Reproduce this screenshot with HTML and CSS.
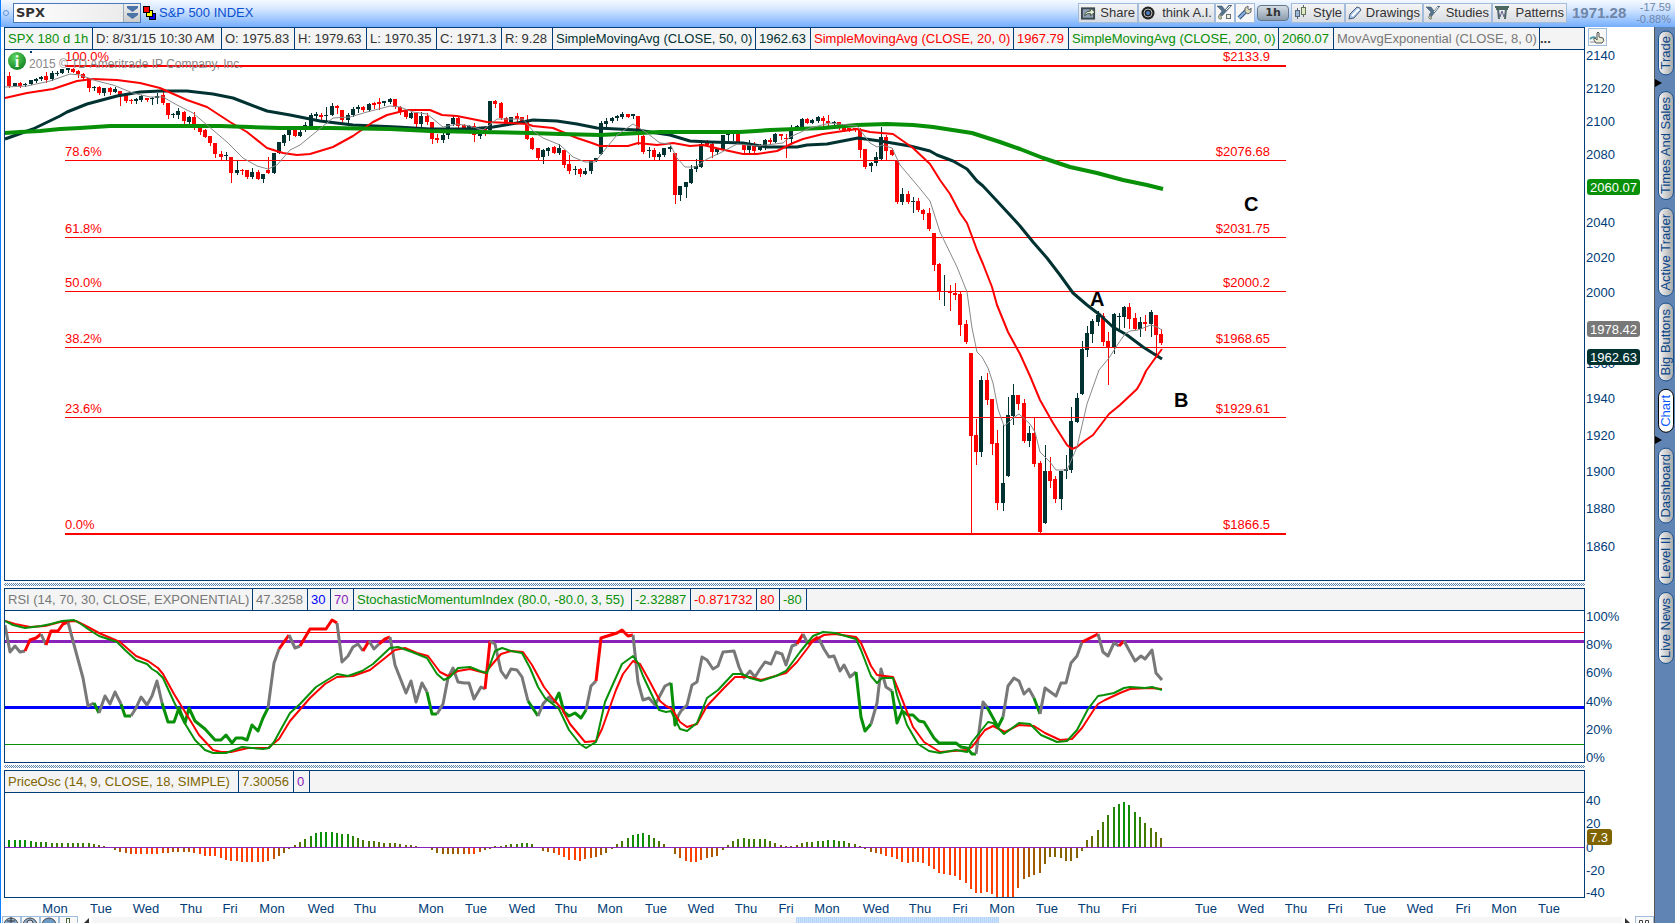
FILE: index.html
```html
<!DOCTYPE html>
<html lang="en">

<head>
    <meta charset="UTF-8">
    <meta name="viewport" content="width=device-width, initial-scale=1.0">
    <title>SPX Chart</title>
    <link rel="stylesheet" href="styles.css">
</head>

<body>
    <div class="workspace">
        <header class="toolbar">
            <span class="link-dot"></span>
            <div class="symbol-box">
                <input type="text" id="symbol" value="SPX" aria-label="Symbol">
                <button class="symbol-drop" aria-label="Symbol list">
                    <svg width="13" height="13" viewBox="0 0 13 13"><path d="M1 0h11v2L6.500 6 1 2zM1 7h11v2l-5.500 4L1 9z" fill="#4a74a8"/></svg>
                </button>
            </div>
            <svg class="squares" width="13" height="14" viewBox="0 0 13 14">
                <rect x="6.500" y="7.500" width="6" height="6" fill="#00f" stroke="#000"/>
                <rect x="3.500" y="4.500" width="6" height="6" fill="#ff0" stroke="#000"/>
                <rect x=".5" y=".5" width="6" height="6" fill="#f00" stroke="#000"/>
            </svg>
            <span class="symbol-name">S&amp;P 500 INDEX</span>
            <div class="tools">
                <button class="tool share">
                    <svg width="15" height="14" viewBox="0 0 16 14"><rect x="1" y="2" width="13" height="11" fill="#8fa3b4" stroke="#3c4650" stroke-width="2"/><path d="M4 10q0-5 6-5V2l5 4-5 4V7.500Q6 7 4 10z" fill="#e8f0d8" stroke="#3c4a3c"/></svg>
                    Share
                </button>
                <button class="tool think">
                    <svg width="14" height="14" viewBox="0 0 14 14"><circle cx="7" cy="7" r="6.500" fill="#222"/><circle cx="7" cy="7" r="4" fill="none" stroke="#bbb"/><circle cx="7" cy="7" r="2" fill="#4c7fc4"/></svg>
                    think A.I.
                </button>
                <button class="tool icon" aria-label="Edit studies">
                    <svg width="15" height="15" viewBox="0 0 15 15"><path d="M0 1h5l3 4 4-5h3L5 11 3 9l2-3z" fill="#56748e" stroke="#34485a" stroke-width=".5"/><path d="M9 5l4-4" stroke="#fff"/><path d="M3 9q-3 4 0 5t0-5z" fill="#c5d6a0" stroke="#777"/><rect x="9.500" y="9.500" width="4" height="4" fill="#eef3dc" stroke="#667"/></svg>
                </button>
                <button class="tool icon" aria-label="Settings">
                    <svg width="15" height="15" viewBox="0 0 15 15"><path d="M2 13l7-7" stroke="#2f5488" stroke-width="4"/><path d="M2 13l7-7" stroke="#8fb4dc" stroke-width="2"/><path d="M8 7V3l3-2v3l2 1 1-2v4l-3 2z" fill="#d8dcb4" stroke="#667"/></svg>
                </button>
                <button class="tool period">1h</button>
                <button class="tool style">
                    <svg width="13" height="15" viewBox="0 0 13 15"><path d="M3.500 3v11M9.500 0v12" stroke="#567"/><rect x="1.500" y="5.500" width="4" height="6" fill="#9cb6d8" stroke="#567"/><rect x="7.500" y="2.500" width="4" height="7" fill="#dfe8c8" stroke="#675"/></svg>
                    Style
                </button>
                <button class="tool drawings">
                    <svg width="14" height="14" viewBox="0 0 14 14"><path d="M1 13l1-5 7-7q3 0 4 3l-7 8z" fill="#a9c6ea" stroke="#465c78"/><path d="M4 10l7-7" stroke="#fff" stroke-width="2"/></svg>
                    Drawings
                </button>
                <button class="tool studies">
                    <svg width="14" height="14" viewBox="0 0 14 14"><path d="M0 1h5l3 4 4-5h2L5 11 3 9l2-3z" fill="#56748e" stroke="#34485a" stroke-width=".5"/><path d="M8 6l4-5" stroke="#fff"/><path d="M4 9q-3 3 0 4t0-4z" fill="#c5d6a0" stroke="#777"/></svg>
                    Studies
                </button>
                <button class="tool patterns">
                    <svg width="14" height="14" viewBox="0 0 14 14"><path d="M0 1h14M1 3h12M3 3l1 10M11 3l-1 10" stroke="#4c6860" stroke-width="2" fill="none"/><path d="M3 5l2 6 2-6 2 6 2-6" stroke="#668" fill="none"/></svg>
                    Patterns
                </button>
            </div>
            <div class="quote">
                <strong>1971.28</strong>
                <span class="change">-17.59<br>-0.88%</span>
            </div>
        </header>

        <main class="charts">
            <section class="panel price">
                <div class="plot">
                    <div class="legend price-legend">
                        <span class="green">SPX 180 d 1h</span>
                        <span>D: 8/31/15 10:30 AM</span>
                        <span>O: 1975.83</span>
                        <span>H: 1979.63</span>
                        <span>L: 1970.35</span>
                        <span>C: 1971.3</span>
                        <span>R: 9.28</span>
                        <span class="dark">SimpleMovingAvg (CLOSE, 50, 0)</span>
                        <span class="dark">1962.63</span>
                        <span class="red">SimpleMovingAvg (CLOSE, 20, 0)</span>
                        <span class="red">1967.79</span>
                        <span class="green">SimpleMovingAvg (CLOSE, 200, 0)</span>
                        <span class="green">2060.07</span>
                        <span class="gray">MovAvgExponential (CLOSE, 8, 0)</span>
                        <strong>...</strong>
                    </div>
                    <svg class="canvas" viewBox="5 50 1579 530" preserveAspectRatio="xMinYMin">
                        <defs>
                            <radialGradient id="info" cx=".4" cy=".3" r=".8">
                                <stop offset="0" stop-color="#5fd65f"/>
                                <stop offset="1" stop-color="#0a7a1c"/>
                            </radialGradient>
                        </defs>
                        <rect x="30" y="51" width="2" height="2" fill="#003c78"/>
                        <g id="candles" shape-rendering="crispEdges"></g>
                        <g id="fib" class="fib"></g>
                        <polyline class="line sma50" points="5,139 33,129 60,116 67,112 87,104 117,96 140,92 160,91 187,91 213,94 233,98 267,111 290,115 320,121 353,125 397,127 430,129 470,129 493,127 517,123 533,120 557,121 577,124 597,128 637,130 670,135 690,141 710,142 743,143 767,147 797,147 807,145 827,144 858,138 880,141 910,146 930,151 937,155 953,161 967,169 977,181 983,186 997,201 1010,215 1020,226 1033,242 1047,258 1060,275 1073,293 1087,305 1100,315 1113,327 1127,335 1143,347 1162,359"/>
                        <polyline class="line sma20" points="5,98 27,93 53,89 77,81 93,79 117,80 140,83 160,88 187,100 207,107 230,122 247,132 267,148 283,153 297,155 310,154 333,147 353,136 373,122 387,115 407,110 430,110 442,115 457,116 487,122 510,123 527,124 533,126 553,128 577,138 592,143 600,146 628,146 638,143 657,145 673,143 690,146 703,145 720,149 743,154 757,154 777,151 793,143 803,139 823,134 857,129 870,132 893,134 913,148 930,164 940,180 950,194 960,213 967,223 977,250 983,264 992,287 997,305 1008,332 1020,354 1030,376 1040,400 1053,423 1067,445 1072,449 1077,447 1083,442 1093,435 1109,414 1120,405 1137,389 1141,382 1146,371 1156,357 1162,349"/>
                        <polyline class="line sma200" points="5,133 20,132 40,131 60,129 80,128 110,126 220,126 250,127 280,128 330,128 390,129 430,131 480,132 530,133 560,134 600,135 640,133 660,132 740,132 770,130 823,128 857,125 887,124 913,125 933,127 972,133 1000,142 1020,149 1043,158 1070,167 1097,173 1123,180 1147,185 1163,189"/>
                        <polyline class="line ema8" points="5,87 27,86 50,81 70,74 80,75 97,81 113,85 133,93 150,97 163,97 177,105 193,113 207,125 227,142 243,158 257,166 268,169 277,165 290,150 300,145 317,131 333,118 350,117 367,112 390,106 400,107 413,112 427,114 443,127 457,124 470,126 483,130 497,119 523,119 533,131 543,138 560,145 573,157 585,162 595,162 603,152 617,135 633,124 647,133 660,143 670,144 677,158 685,167 695,167 707,159 720,153 737,144 757,146 783,143 790,137 810,128 830,123 857,126 870,143 877,147 882,145 892,148 900,165 917,185 930,201 940,232 957,267 967,292 972,328 977,352 982,357 988,368 993,383 998,409 1004,426 1008,423 1013,418 1019,414 1030,424 1035,432 1040,452 1050,462 1056,470 1067,470 1077,447 1087,404 1099,370 1109,358 1118,344 1125,334 1130,331 1138,330 1151,325 1157,327 1162,330"/>
                        <text x="29" y="68" class="copyright">2015 © TD Ameritrade IP Company, Inc.</text>
                        <circle cx="17" cy="61" r="9" fill="url(#info)"/>
                        <text x="17" y="67" class="info-i">i</text>
                        <g class="wave">
                            <text x="1090" y="306">A</text>
                            <text x="1174" y="407">B</text>
                            <text x="1244" y="211">C</text>
                        </g>
                    </svg>
                </div>
                <div class="axis">
                    <button class="hand" aria-label="Pan chart">
                        <svg width="16" height="14" viewBox="0 0 16 14"><path d="M1 9q3-3 6-1" stroke="#4c9ca8" fill="none" stroke-width="2"/><path d="M1 12h7" stroke="#889"/><path d="M7 13q-4-5-1-5l2 2V3q1-2 2 0v4l4 1q2 3-1 5z" fill="#e8ecd4" stroke="#555"/></svg>
                    </button>
                    <svg viewBox="1585 27 69 554" preserveAspectRatio="xMinYMin">
                        <g class="ticks">
                            <text x="1586" y="60">2140</text>
                            <text x="1586" y="93">2120</text>
                            <text x="1586" y="126">2100</text>
                            <text x="1586" y="159">2080</text>
                            <text x="1586" y="227">2040</text>
                            <text x="1586" y="262">2020</text>
                            <text x="1586" y="297">2000</text>
                            <text x="1586" y="368">1960</text>
                            <text x="1586" y="403">1940</text>
                            <text x="1586" y="440">1920</text>
                            <text x="1586" y="476">1900</text>
                            <text x="1586" y="513">1880</text>
                            <text x="1586" y="551">1860</text>
                        </g>
                        <g class="tags">
                            <rect x="1587" y="179" width="53" height="16" rx="3" fill="#089008"/>
                            <text x="1590" y="192">2060.07</text>
                            <rect x="1587" y="321" width="53" height="16" rx="3" fill="#787878"/>
                            <text x="1590" y="334">1978.42</text>
                            <rect x="1587" y="349" width="53" height="16" rx="3" fill="#003232"/>
                            <text x="1590" y="362">1962.63</text>
                        </g>
                    </svg>
                </div>
            </section>

            <div class="splitter"></div>

            <section class="panel rsi">
                <div class="plot">
                    <div class="legend rsi-legend">
                        <span class="gray">RSI (14, 70, 30, CLOSE, EXPONENTIAL)</span>
                        <span class="gray">47.3258</span>
                        <span class="blue">30</span>
                        <span class="purple">70</span>
                        <span class="green">StochasticMomentumIndex (80.0, -80.0, 3, 55)</span>
                        <span class="green">-2.32887</span>
                        <span class="red">-0.871732</span>
                        <span class="red">80</span>
                        <span class="green">-80</span>
                    </div>
                    <svg class="canvas" viewBox="5 611 1579 151" preserveAspectRatio="xMinYMin">
                        <g shape-rendering="crispEdges">
                            <rect x="5" y="632" width="1579" height="1" fill="#f00"/>
                            <rect x="5" y="640" width="1579" height="3" fill="#8822bb"/>
                            <rect x="5" y="706" width="1579" height="3" fill="#00f"/>
                            <rect x="5" y="744" width="1579" height="1" fill="#089008"/>
                        </g>
                        <g id="rsi" class="rsi-line"></g>
                        <polyline class="line smi-avg" points="5,621 15,624 30,627 45,626 60,622 76,621 88,627 99,633 120,642 136,656 148,661 158,668 163,674 174,694 190,720 199,735 213,750 221,752 231,752 248,748 268,748 279,739 290,721 310,698 325,684 337,677 353,676 370,670 385,658 395,650 405,648 417,653 428,656 440,672 448,676 458,671 470,669 485,673 490,667 501,654 511,651 523,652 532,665 544,687 554,700 562,709 570,724 585,742 596,741 602,729 616,690 623,674 633,661 640,664 650,682 660,701 666,706 672,709 680,722 687,727 697,724 707,706 724,688 735,677 750,677 761,680 786,673 797,662 813,641 824,635 835,634 856,637 861,643 871,666 877,675 893,677 900,694 913,727 924,742 940,752 967,750 972,747 985,730 993,726 1005,732 1019,725 1034,726 1045,733 1060,740 1072,739 1082,728 1093,711 1098,704 1105,700 1120,693 1130,689 1150,688 1162,689"/>
                        <polyline class="line smi" points="5,621 13,625 25,628 41,626 51,624 62,621 74,620 81,624 88,629 99,636 117,642 125,650 136,660 147,664 152,669 157,672 163,678 174,702 184,722 195,740 205,750 213,753 226,753 242,747 252,748 263,749 269,748 274,742 280,731 290,713 300,704 316,687 332,677 337,674 348,676 362,671 373,664 390,648 398,647 412,652 427,658 437,674 444,680 450,677 458,668 470,667 480,671 487,673 495,651 502,648 511,651 522,653 530,668 538,687 545,698 559,709 569,730 580,744 586,748 596,742 605,702 613,684 622,664 633,656 638,663 643,676 659,710 666,712 671,711 675,719 680,729 687,731 697,723 707,698 718,690 733,674 742,674 750,678 761,681 776,676 786,671 800,652 813,636 823,632 835,633 856,639 861,650 871,676 877,683 882,678 893,678 897,695 907,725 918,744 929,751 940,753 956,750 967,752 972,742 988,722 993,723 1004,734 1019,723 1030,724 1041,735 1057,742 1067,741 1077,730 1088,709 1098,696 1104,695 1114,693 1124,688 1130,687 1145,688 1152,687 1162,690"/>
                    </svg>
                </div>
                <div class="axis">
                    <svg viewBox="1585 588 69 175" preserveAspectRatio="xMinYMin">
                        <g class="ticks">
                            <text x="1586" y="621">100%</text>
                            <text x="1586" y="649">80%</text>
                            <text x="1586" y="677">60%</text>
                            <text x="1586" y="706">40%</text>
                            <text x="1586" y="734">20%</text>
                            <text x="1586" y="762">0%</text>
                        </g>
                    </svg>
                </div>
            </section>

            <div class="splitter"></div>

            <section class="panel osc">
                <div class="plot">
                    <div class="legend osc-legend">
                        <span class="olive">PriceOsc (14, 9, CLOSE, 18, SIMPLE)</span>
                        <span class="olive">7.30056</span>
                        <span class="purple">0</span>
                    </div>
                    <svg class="canvas" viewBox="5 793 1579 104" preserveAspectRatio="xMinYMin">
                        <g id="osc" shape-rendering="crispEdges"></g>
                        <rect x="5" y="847" width="1579" height="1" fill="#8822bb" shape-rendering="crispEdges"/>
                    </svg>
                </div>
                <div class="axis">
                    <svg viewBox="1585 770 69 128" preserveAspectRatio="xMinYMin">
                        <g class="ticks">
                            <text x="1586" y="805">40</text>
                            <text x="1586" y="828">20</text>
                            <text x="1586" y="852">0</text>
                            <text x="1586" y="875">-20</text>
                            <text x="1586" y="897">-40</text>
                        </g>
                        <g class="tags">
                            <rect x="1587" y="829" width="25" height="16" rx="3" fill="#7f6400"/>
                            <text x="1590" y="842">7.3</text>
                        </g>
                    </svg>
                </div>
            </section>

            <svg class="dates" id="dates" viewBox="4 898 1650 18" preserveAspectRatio="xMinYMin"></svg>
        </main>

        <footer class="bottom-bar">
            <button class="mini" aria-label="Pointer"><svg width="16" height="16" viewBox="0 0 16 16"><circle cx="8" cy="8" r="7" fill="#8fb0d0" stroke="#444"/><path d="M8 0v10M4 4h8" stroke="#333"/></svg></button>
            <button class="mini" aria-label="Zoom in"><svg width="16" height="16" viewBox="0 0 16 16"><circle cx="8" cy="8" r="7" fill="#8fb0d0" stroke="#444"/><circle cx="8" cy="6" r="3" fill="#dde" stroke="#444"/></svg></button>
            <button class="mini" aria-label="Zoom out"><svg width="16" height="16" viewBox="0 0 16 16"><circle cx="8" cy="8" r="7" fill="#6f9cc4" stroke="#444"/></svg></button>
            <button class="mini" aria-label="Pan"><svg width="16" height="16" viewBox="0 0 16 16"><rect x="6.500" y="1.500" width="3" height="9" fill="#fff" stroke="#463"/></svg></button>
            <svg class="scroll-left" width="6" height="7" viewBox="0 0 6 7"><path d="M5 2v5H0z" fill="#333"/></svg>
            <div class="scroll-track"><div class="scroll-thumb"></div></div>
            <svg width="6" height="7" viewBox="0 0 6 7"><path d="M1 2v5h5z" fill="#333"/></svg>
            <button class="mini set" aria-label="Drawing set"><svg width="16" height="16" viewBox="0 0 16 16"><path d="M3.500 3.500h3v6h-3zM9.500 3.500h3v6h-3z" fill="none" stroke="#444"/></svg></button>
        </footer>
    </div>

    <nav class="gadgets">
        <button>Trade</button>
        <i class="arrow"></i>
        <button>Times And Sales</button>
        <button>Active Trader</button>
        <button>Big Buttons</button>
        <button class="active">Chart</button>
        <i class="arrow"></i>
        <button>Dashboard</button>
        <button>Level II</button>
        <button>Live News</button>
    </nav>

    <script src="chart.js"></script>
</body>

</html>
```
FILE: styles.css
```css
* {
    box-sizing: border-box;
}

body {
    margin: 0;
    display: flex;
    height: 100vh;
    overflow: hidden;
    background: #fff;
    color: #333;
    font-family: "Liberation Sans", Arial, sans-serif;
    font-size: 13px;
}

button,
input {
    font: inherit;
    color: inherit;
    margin: 0;
    padding: 0;
}

svg {
    display: block;
}

.workspace {
    flex: 1;
    min-width: 0;
    display: flex;
    flex-direction: column;
    border-left: 1px solid #0a80ff;
}

/* Top toolbar. It runs on above the gadget strip */
.toolbar {
    position: relative;
    z-index: 1;
    display: flex;
    align-items: center;
    height: 27px;
    margin-right: -21px;
    padding: 0 4px 2px 2px;
    background: linear-gradient(#f4f9ff, #d4e6ff 35%, #74aeff);
}

.link-dot {
    width: 6px;
    height: 6px;
    margin-right: 4px;
    border: 1px solid #5c94dc;
    border-radius: 50%;
    background: #c4dcfa;
}

.symbol-box {
    display: flex;
    width: 128px;
    height: 20px;
    border: 1px solid #4a7ab8;
    background: linear-gradient(90deg, #fff, #e8e8e8);
}

.symbol-box input {
    flex: 1;
    min-width: 0;
    padding-left: 2px;
    border: none;
    background: none;
    font-family: "DejaVu Sans", sans-serif;
    font-weight: bold;
}

.symbol-drop {
    display: flex;
    align-items: center;
    justify-content: center;
    width: 17px;
    border: none;
    border-left: 1px solid #9ab;
    background: linear-gradient(#eee, #ccc);
}

.squares {
    margin: 0 3px 0 2px;
}

.symbol-name {
    color: #0a50d0;
}

.tools {
    display: flex;
    align-items: center;
    margin-left: auto;
}

.tool {
    display: flex;
    align-items: center;
    justify-content: space-between;
    height: 20px;
    padding: 0 2px;
    border: 1px solid #a4bcdc;
    background: linear-gradient(#f4f4f4, #d8dce2);
    white-space: nowrap;
}

.share {
    width: 60px;
}

.think {
    width: 77px;
}

.icon {
    width: 20px;
    padding: 0 1px;
    background: #f6f6f6;
}

.period {
    width: 32px;
    height: 16px;
    margin: 0 2px;
    justify-content: center;
    border: 1px solid #667888;
    border-radius: 4px;
    background: linear-gradient(#d4dce4, #8c9cac);
    font-family: "DejaVu Sans", sans-serif;
    font-size: 11px;
    font-weight: bold;
}

.style {
    width: 54px;
}

.drawings {
    width: 78px;
}

.studies {
    width: 69px;
}

.patterns {
    width: 75px;
}

.quote {
    display: flex;
    align-items: center;
    justify-content: space-between;
    width: 99px;
    margin-left: 5px;
    color: #6f86a8;
}

.quote strong {
    font-size: 15px;
}

.change {
    font-size: 11px;
    line-height: 12px;
    text-align: right;
}

/* Chart panels */
.charts {
    flex: 1;
    min-height: 0;
    display: flex;
    flex-direction: column;
    margin-left: 3px;
}

.panel {
    display: flex;
}

.price {
    flex: 1;
    min-height: 0;
}

.rsi {
    height: 175px;
}

.osc {
    height: 128px;
}

.plot {
    flex: 1;
    min-width: 0;
    display: flex;
    flex-direction: column;
    border: 1px solid #003c78;
}

.canvas {
    flex: 1;
    width: 100%;
    min-height: 0;
}

.price .canvas {
    overflow: visible;
}

.axis {
    position: relative;
    width: 69px;
}

.axis > svg {
    width: 100%;
    height: 100%;
    overflow: visible;
}

.axis .hand {
    position: absolute;
    top: 1px;
    left: 3px;
    width: 19px;
    height: 18px;
    border: 1px solid #a0bcdc;
    background: #f8f8f8;
}

.legend {
    display: grid;
    height: 22px;
    line-height: 21px;
    border-bottom: 1px solid #003c78;
    background: #f4f4f4;
    white-space: nowrap;
}

.legend span {
    padding-left: 3px;
    border-right: 1px solid #003c78;
}

.price-legend {
    grid-template-columns: 88px 129px 73px 72px 70px 65px 51px 203px 55px 203px 55px 210px 55px 206px 1fr;
}

.rsi-legend {
    grid-template-columns: 248px 55px 23px 23px 278px 59px 66px 23px 27px;
}

.osc-legend {
    grid-template-columns: 234px 55px 16px;
}

.green { color: #089008; }
.red { color: #f00; }
.dark { color: #003232; }
.gray { color: #787878; }
.blue { color: #00f; }
.purple { color: #8822bb; }
.olive { color: #7f6400; }

/* Study lines */
.line {
    fill: none;
    stroke-linejoin: round;
}

.sma200 {
    stroke: #089008;
    stroke-width: 4;
}

.sma50 {
    stroke: #003232;
    stroke-width: 3;
}

.sma20 {
    stroke: #f00;
    stroke-width: 2;
}

.ema8 {
    stroke: #888;
}

.smi {
    stroke: #089008;
    stroke-width: 2;
}

.smi-avg {
    stroke: #f00;
    stroke-width: 2;
}

.rsi-line path {
    fill: none;
    stroke-width: 3;
    stroke-linejoin: round;
}

.fib {
    fill: #f00;
}

.fib .price-label {
    text-anchor: end;
}

.copyright {
    fill: #888;
    font-size: 12px;
}

.info-i {
    fill: #fff;
    font: bold 16px "Liberation Serif", serif;
    text-anchor: middle;
}

.wave {
    font-size: 20px;
    font-weight: bold;
    fill: #000;
}

.ticks {
    fill: #003c78;
}

.tags text {
    fill: #fff;
}

.dates {
    width: 100%;
    height: 18px;
    fill: #003c78;
    text-anchor: middle;
}

/* Dithered drag bar between the panels */
.splitter {
    height: 7px;
    margin-right: 69px;
    padding: 2px 0;
    background: repeating-conic-gradient(#5c84b4 0 25%, #fff 0 50%) 0 0 / 2px 2px content-box;
}

.bottom-bar {
    display: flex;
    height: 7px;
    overflow: hidden;
    padding-left: 1px;
}

.mini {
    flex: none;
    width: 19px;
    height: 18px;
    border: 1px solid #a0bcdc;
    background: #f8f8f8;
}

.scroll-left {
    margin-left: 6px;
}

.set {
    margin-left: 5px;
}

.scroll-track {
    flex: 1;
    display: flex;
    justify-content: center;
    margin: 1px 2px 0;
    padding-left: 80px;
    background: #f6f6f6;
}

.scroll-thumb {
    width: 14%;
    height: 6px;
    background: repeating-linear-gradient(90deg, #b4d4fc 0 1px, #cce2ff 1px 2px);
}

/* Gadget strip on the right */
.gadgets {
    flex: none;
    width: 21px;
    display: flex;
    flex-direction: column;
    align-items: flex-end;
    gap: 7px;
    padding: 30px 1px 0 0;
    border-left: 1px solid #555;
    background: #6084b4;
}

.gadgets button {
    width: 16px;
    padding: 5px 0;
    border: 1px solid #1c5490;
    border-radius: 8px;
    background: linear-gradient(90deg, #aaa, #f4f4f4);
    color: #0a4688;
    line-height: 14px;
    writing-mode: vertical-rl;
    transform: rotate(180deg);
    white-space: nowrap;
}

.gadgets .active {
    border-color: #000;
    background: #fff;
    color: #0a5aff;
}

.arrow {
    align-self: flex-start;
    height: 8px;
    margin: -3px 0;
    border: 4px solid transparent;
    border-left: 7px solid #000;
    border-right: none;
}
```
FILE: chart.js
```js
const SVG = "http://www.w3.org/2000/svg";
const FIRST_BAR = 9.4;
const BAR_STEP = 5.283;

const RED = "#ff0000";
const DARK = "#003232";

// high, body top, body bottom, low, 1 = up bar
const candles = [
    [72,76,86,87,0],[83,83,86,86,1],[82,83,86,87,0],[83,84,85,86,1],[80,80,84,84,1],[78,79,81,82,1],[76,77,79,80,1],[72,76,80,82,0],
    [71,73,79,80,1],[71,73,74,75,1],[69,69,73,73,1],[68,68,70,72,1],[68,69,72,72,0],[70,71,74,77,0],[73,74,78,79,0],[78,78,88,91,0],
    [86,87,88,90,1],[86,87,93,94,0],[88,88,93,95,1],[87,88,92,94,0],[87,89,92,92,1],[91,91,95,105,0],[95,95,101,102,0],[99,100,101,103,0],
    [98,99,101,103,1],[95,96,100,101,1],[98,98,100,101,0],[97,98,99,104,1],[93,96,98,103,1],[92,95,103,104,0],[103,103,115,118,0],[113,114,115,117,1],
    [108,111,115,118,1],[111,112,121,124,0],[116,117,122,123,1],[112,117,128,129,0],[128,128,132,134,0],[129,130,137,137,0],[136,136,143,145,0],[143,143,154,157,0],
    [151,154,157,160,0],[152,155,156,159,1],[157,157,173,182,0],[160,170,173,174,1],[169,170,171,174,0],[170,170,177,178,0],[168,172,177,178,1],[170,172,179,179,0],
    [174,174,179,182,1],[157,170,173,173,0],[153,153,173,173,1],[142,142,153,153,1],[134,135,143,145,1],[129,130,135,140,1],[130,130,136,136,0],[129,132,136,136,1],
    [122,125,130,131,1],[113,115,126,127,1],[112,114,116,119,1],[113,115,117,119,0],[107,115,116,123,1],[103,106,115,115,1],[105,106,108,113,0],[110,110,120,124,0],
    [113,115,120,123,1],[107,109,115,116,1],[105,107,109,112,1],[106,107,110,111,0],[103,104,110,111,1],[102,103,105,108,0],[98,102,104,109,0],[101,101,103,105,1],
    [98,99,102,103,1],[99,99,107,108,0],[106,107,112,114,0],[111,111,117,118,0],[112,113,118,118,1],[112,113,124,126,0],[112,116,124,127,1],[113,116,122,124,0],
    [122,122,139,143,0],[134,138,140,142,0],[132,135,140,142,1],[124,124,135,138,1],[116,118,124,125,1],[117,118,126,130,0],[124,125,128,129,0],[125,126,128,133,1],
    [123,126,135,141,0],[131,134,136,138,1],[129,129,134,135,0],[101,101,130,130,1],[100,101,104,107,0],[102,103,118,119,0],[117,118,124,125,0],[117,117,123,124,1],
    [113,116,119,121,0],[117,117,121,122,0],[115,121,139,139,0],[137,138,149,149,0],[148,148,158,160,0],[149,150,157,163,1],[147,148,151,155,1],[146,147,153,153,0],
    [144,148,153,154,1],[150,150,165,167,0],[155,164,171,173,0],[166,169,170,174,1],[168,169,174,176,0],[168,171,174,174,1],[160,161,171,173,1],[158,158,161,161,1],
    [121,123,154,154,1],[118,121,124,128,1],[117,118,121,122,1],[115,116,118,120,1],[112,114,117,118,1],[114,114,117,117,0],[114,114,116,118,1],[116,116,135,144,0],
    [135,136,152,153,0],[147,150,151,157,1],[148,150,157,160,0],[152,154,157,160,1],[148,148,155,156,1],[146,147,149,151,1],[153,153,195,203,0],[186,186,195,200,1],
    [182,182,187,197,1],[165,169,183,183,1],[159,166,169,171,1],[142,144,167,167,1],[140,142,145,146,0],[143,144,152,157,0],[148,149,152,154,1],[135,135,149,150,1],
    [133,134,135,140,1],[133,133,134,140,1],[133,133,143,143,0],[142,142,150,152,0],[140,145,150,153,1],[142,145,151,154,0],[144,146,150,150,1],[139,140,148,149,1],
    [138,140,142,144,0],[133,134,142,142,1],[134,134,136,139,0],[134,138,139,157,0],[125,130,139,142,1],[125,126,128,129,1],[118,119,127,127,1],[118,119,123,123,0],
    [119,120,123,123,1],[116,117,121,122,1],[116,118,121,125,0],[115,121,123,125,0],[121,122,123,124,1],[122,122,125,129,0],[128,128,130,131,0],[128,128,130,131,0],
    [128,128,130,131,0],[128,130,150,157,0],[149,149,167,168,0],[162,163,166,171,1],[152,157,163,165,1],[127,137,159,159,1],[135,137,151,159,0],[148,150,155,155,0],
    [160,161,202,203,0],[188,194,202,204,1],[191,194,202,203,0],[197,201,202,212,1],[198,201,210,211,0],[209,210,214,219,0],[208,213,229,230,0],[233,233,265,270,0],
    [263,264,291,299,0],[275,291,292,305,1],[285,291,293,310,0],[283,293,295,299,0],[292,294,325,335,0],[320,324,342,343,0],[353,353,436,534,0],[419,435,452,464,0],
    [376,380,452,456,1],[373,380,400,404,0],[399,399,444,454,0],[430,443,503,509,0],[425,483,503,510,1],[397,415,476,476,1],[384,395,416,424,1],[395,395,404,409,0],
    [399,403,441,442,0],[426,433,441,446,1],[417,433,464,466,0],[461,463,532,534,0],[445,471,523,523,1],[457,471,481,487,0],[476,479,499,502,0],[471,471,499,509,1],
    [455,469,471,478,1],[407,421,470,472,1],[393,398,422,422,1],[341,349,394,394,1],[326,333,350,356,1],[319,321,334,342,1],[311,315,322,325,1],[313,316,342,345,0],
    [332,341,348,384,0],[313,314,348,353,1],[313,316,317,330,1],[306,307,317,327,1],[303,307,319,328,0],[313,318,329,329,0],[317,322,329,336,1],[315,322,324,330,0],
    [310,312,324,336,1],[315,315,335,357,0],[329,334,343,344,0]
];

// retracement level, price, y, line weight
const levels = [
    ["100.0%", "$2133.9", 65, 2],
    ["78.6%", "$2076.68", 160, 1],
    ["61.8%", "$2031.75", 237, 1],
    ["50.0%", "$2000.2", 291, 1],
    ["38.2%", "$1968.65", 347, 1],
    ["23.6%", "$1929.61", 417, 1],
    ["0.0%", "$1866.5", 533, 2]
];

// runs of the RSI line: n = normal, o = overbought, s = oversold
const rsiRuns = [
    ["n", "5,625 10,652 15,646 20,652 25,651"],
    ["o", "30,640 36,638 41,634"],
    ["n", "46,645"],
    ["o", "51,631 58,631 63,624 68,622"],
    ["n", "73,641 83,678 88,706 94,703"],
    ["s", "99,713"],
    ["n", "105,696 110,704 115,692 121,704"],
    ["s", "125,716 131,716"],
    ["n", "136,708 141,697 147,705 152,696 157,681 162,703"],
    ["s", "168,722 174,722 179,708 185,723 189,708 195,721 205,729 215,740 221,740 226,735 232,743 236,738 242,738 247,740 252,725 258,731 263,718 268,708"],
    ["n", "274,663 279,649"],
    ["o", "284,642 289,635"],
    ["n", "295,648 300,646"],
    ["o", "310,629 326,629 332,620 337,623"],
    ["n", "342,662 348,656 353,647 358,644 363,651"],
    ["o", "369,641"],
    ["n", "374,649 379,644"],
    ["o", "385,639 390,637"],
    ["n", "395,665 406,693 411,681 416,702 422,683 427,692"],
    ["s", "432,714 437,714"],
    ["n", "443,704 448,678 453,668 458,682 464,683 469,683 474,699 481,687 485,689"],
    ["o", "490,641"],
    ["n", "495,644 501,671 506,678 511,669 517,670 522,677 528,701"],
    ["s", "538,716"],
    ["n", "543,704 549,697 554,703"],
    ["s", "559,693 564,712 569,716 575,713 581,718 586,710"],
    ["n", "591,686 596,681"],
    ["o", "601,638 617,633 622,630 628,636 633,635"],
    ["n", "638,682 643,700 649,698 655,705 665,686 671,683"],
    ["s", "675,725 678,716"],
    ["n", "681,711 687,705 692,685 697,682 702,657 707,660 713,669 718,666 723,652 734,651 739,667 744,678 750,671 755,677 760,669 765,662 771,664 776,652 782,654 786,665 792,646 797,644"],
    ["o", "803,634"],
    ["n", "808,644"],
    ["o", "818,637"],
    ["n", "824,649 829,657 834,656 840,671 844,665 850,677 856,672"],
    ["s", "861,717 865,731 871,724"],
    ["n", "877,703 881,669 886,687 892,691"],
    ["s", "897,723 902,711 908,715 913,715 919,721 924,722 934,738 939,743 956,743 961,747 967,748 972,754 976,754"],
    ["n", "983,702 987,707"],
    ["s", "998,727 1003,717"],
    ["n", "1008,686 1014,678 1019,681 1024,694 1029,689 1034,698"],
    ["s", "1040,714"],
    ["n", "1045,688 1056,696 1061,683 1066,683 1071,663 1077,656 1082,642"],
    ["o", "1098,634"],
    ["n", "1103,652 1108,656 1114,643 1119,646"],
    ["o", "1124,641"],
    ["n", "1135,661 1141,656 1145,659 1152,650 1156,673 1162,680"]
];

// bar heights of the price oscillator
const osc = [
    7,7,7,7,6,5,5,5,4,4,4,4,4,4,4,4,3,2,1,0,-2,-4,-5,-6,-6,-6,-6,-6,-6,-5,-5,-4,-4,-4,-4,-5,-6,-8,-8,-8,
    -10,-12,-13,-13,-14,-14,-14,-14,-14,-13,-11,-8,-5,-1,2,5,8,11,14,15,15,15,14,13,13,11,9,7,6,6,5,4,4,4,3,2,2,1,0,0,
    -2,-5,-6,-6,-6,-6,-6,-6,-6,-4,-2,-1,1,1,2,3,3,4,4,3,0,-3,-4,-5,-7,-9,-12,-12,-13,-11,-10,-9,-7,-5,-1,3,6,9,12,13,
    14,12,9,6,3,0,-6,-10,-13,-14,-14,-12,-10,-9,-8,-2,2,6,8,9,8,8,8,8,6,4,2,1,1,2,4,5,5,6,6,7,7,6,6,4,
    3,1,-1,-4,-5,-6,-8,-9,-11,-14,-15,-14,-14,-15,-18,-21,-25,-26,-27,-28,-32,-35,-41,-45,-45,-44,-46,-50,-50,-50,-49,-40,-31,-29,-27,-25,-16,-9,-9,-10,
    -13,-13,-10,-3,7,11,17,25,32,40,43,45,42,35,30,24,19,15,9
];

const dates = [
    ["Mon", 55], ["Tue", 101], ["Wed", 146], ["Thu", 191], ["Fri", 230], ["Mon", 272], ["Wed", 321], ["Thu", 365],
    ["Mon", 431], ["Tue", 476], ["Wed", 522], ["Thu", 566], ["Mon", 610], ["Tue", 656], ["Wed", 701], ["Thu", 746],
    ["Fri", 786], ["Mon", 827], ["Wed", 876], ["Thu", 920], ["Fri", 960], ["Mon", 1002], ["Tue", 1047], ["Thu", 1089],
    ["Fri", 1129], ["Tue", 1206], ["Wed", 1251], ["Thu", 1296], ["Fri", 1335], ["Tue", 1375], ["Wed", 1420], ["Fri", 1463],
    ["Mon", 1504], ["Tue", 1549]
];

function add(parent, tag, attrs, text) {
    const el = document.createElementNS(SVG, tag);
    for (const key in attrs) {
        el.setAttribute(key, attrs[key]);
    }
    if (text) {
        el.textContent = text;
    }
    parent.appendChild(el);
}

function barX(i) {
    return Math.round(FIRST_BAR + BAR_STEP * i);
}

function mix(a, b, t) {
    return "rgb(" + a.map((v, i) => Math.round(v + (b[i] - v) * t)).join(",") + ")";
}

const candleGroup = document.getElementById("candles");
candles.forEach(([high, top, bottom, low, up], i) => {
    const fill = up ? DARK : RED;
    const x = barX(i);
    add(candleGroup, "rect", { x: x, y: high, width: 1, height: low - high + 1, fill });
    add(candleGroup, "rect", { x: x - 2, y: top, width: 4, height: bottom - top, fill });
});

const fibGroup = document.getElementById("fib");
levels.forEach(([percent, price, y, weight]) => {
    add(fibGroup, "rect", { x: 65, y: y, width: 1221, height: weight, "shape-rendering": "crispEdges" });
    add(fibGroup, "text", { x: 65, y: y - 4 }, percent);
    add(fibGroup, "text", { x: 1270, y: y - 4, class: "price-label" }, price);
});

const rsiGroup = document.getElementById("rsi");
const rsiColors = { n: "#787878", o: "#ff0000", s: "#089008" };
let last = "";
rsiRuns.forEach(([kind, points]) => {
    add(rsiGroup, "path", { d: "M" + last + " " + points, stroke: rsiColors[kind] });
    last = points.split(" ").pop();
});

const oscGroup = document.getElementById("osc");
osc.forEach((value, i) => {
    if (value === 0) return;
    const recent = osc.slice(Math.max(0, i - 20), i + 1).map(Math.abs);
    const t = Math.abs(value) / Math.max(...recent);
    const fill = value > 0 ? mix([127, 100, 0], [8, 144, 8], t) : mix([127, 100, 0], [255, 64, 0], t * t);
    add(oscGroup, "rect", { x: barX(i) - 1, y: value > 0 ? 847 - value : 848, width: 2, height: Math.abs(value), fill });
});

const dateRow = document.getElementById("dates");
dates.forEach(([day, x]) => add(dateRow, "text", { x: x, y: 913 }, day));
```
